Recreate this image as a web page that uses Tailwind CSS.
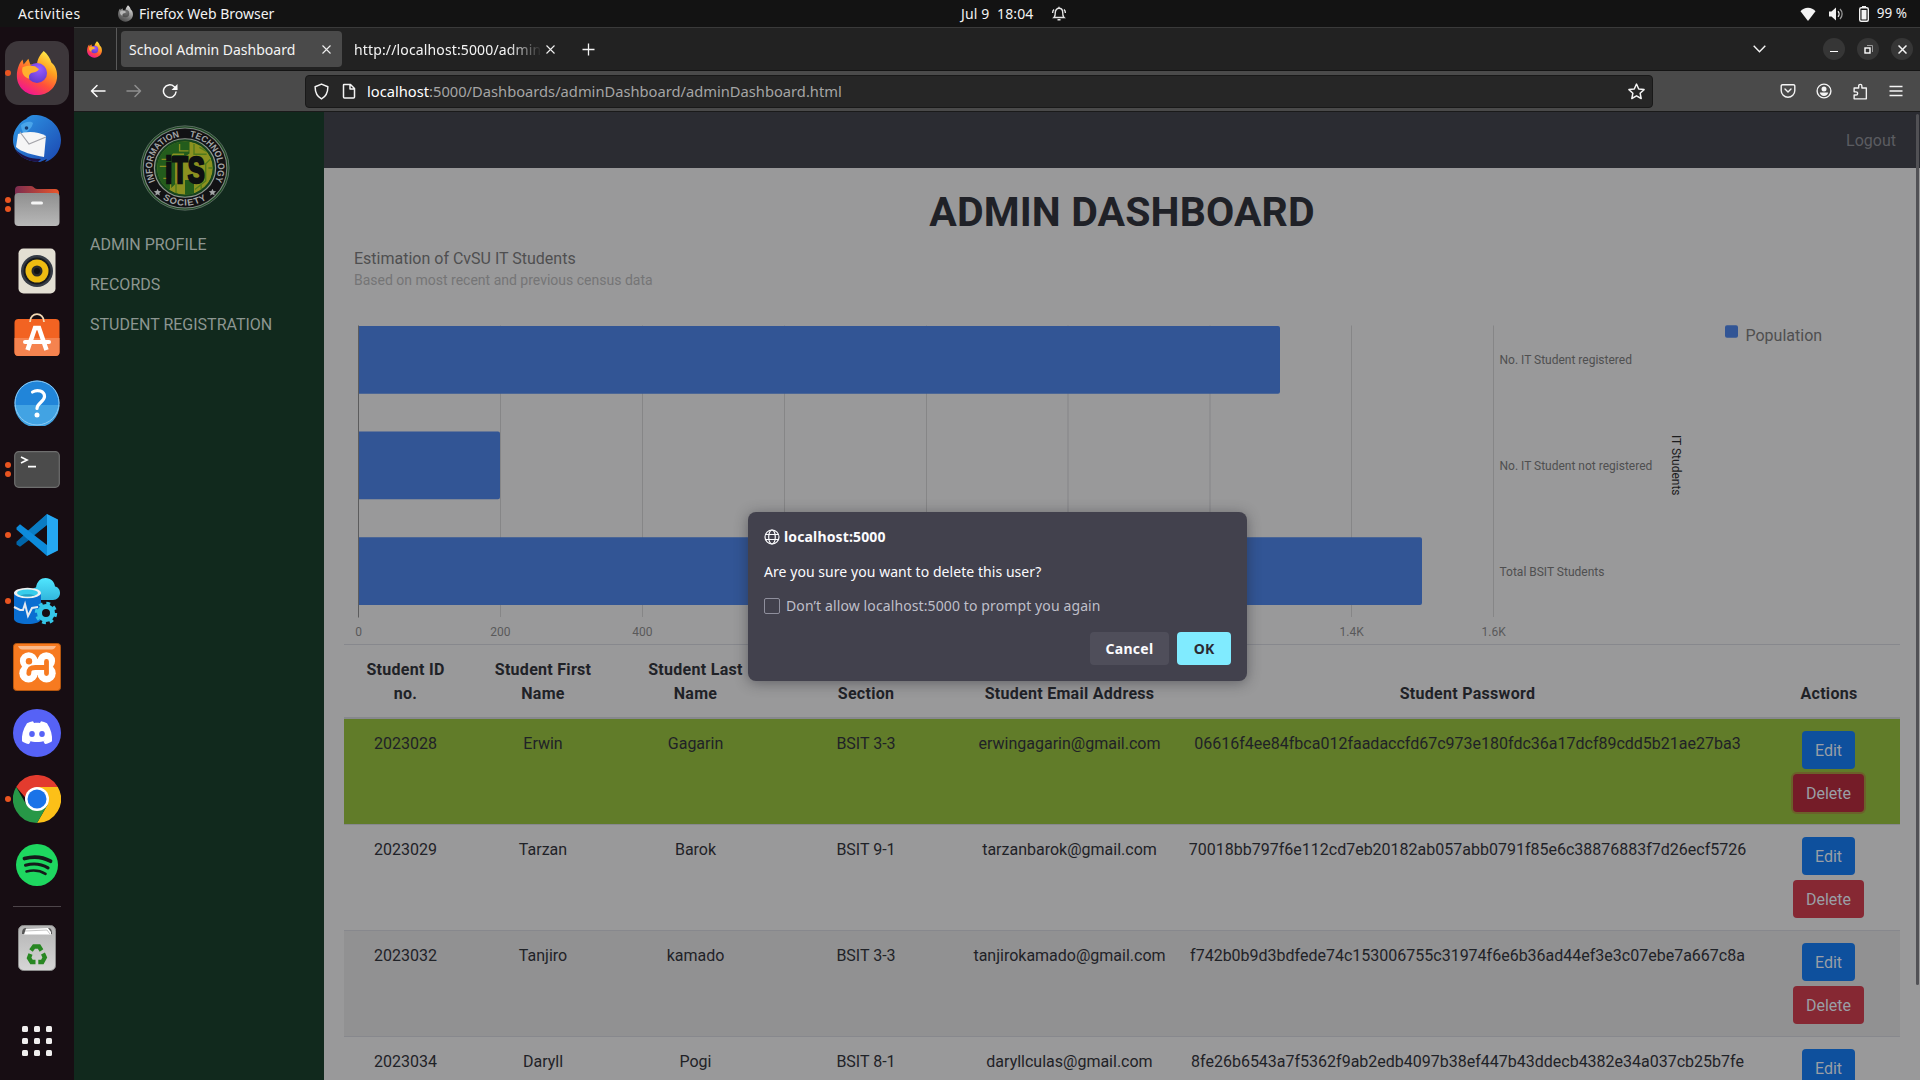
<!DOCTYPE html>
<html lang="en">
<head>
<meta charset="utf-8">
<title>School Admin Dashboard</title>
<script src="https://cdn.jsdelivr.net/npm/@tailwindcss/browser@4"></script>
</head>
<body class="w-[1920px] h-[1080px] overflow-hidden bg-[#99999a] font-['Roboto',sans-serif]">
<svg class="absolute size-0">
  <defs>
    <linearGradient id="fxBody" x1="0.8" y1="0" x2="0.25" y2="1"><stop offset="0" stop-color="#fff44f"/><stop offset=".35" stop-color="#ffa020"/><stop offset=".65" stop-color="#ff4f3a"/><stop offset="1" stop-color="#f0109a"/></linearGradient>
    <radialGradient id="fxCore" cx=".6" cy=".3" r=".8"><stop offset="0" stop-color="#9a5cff"/><stop offset="1" stop-color="#5b35c8"/></radialGradient>
    <linearGradient id="tb" x1="0" y1="0" x2="1" y2="1"><stop offset="0" stop-color="#2f9be8"/><stop offset="1" stop-color="#1b46b0"/></linearGradient>
    <linearGradient id="fold" x1="0" y1="0" x2="1" y2="0"><stop offset="0" stop-color="#7b2c50"/><stop offset="1" stop-color="#e9562a"/></linearGradient>
    <linearGradient id="grey" x1="0" y1="0" x2="0" y2="1"><stop offset="0" stop-color="#8f8f8f"/><stop offset="1" stop-color="#b8b8b8"/></linearGradient>
    <linearGradient id="bin" x1="0" y1="0" x2="0" y2="1"><stop offset="0" stop-color="#b4b4b4"/><stop offset="1" stop-color="#d6d6d6"/></linearGradient>
    <linearGradient id="cloud" x1="0" y1="0" x2="0" y2="1"><stop offset="0" stop-color="#50e6ff"/><stop offset="1" stop-color="#32b6dc"/></linearGradient>
    <symbol id="firefox" viewBox="0 0 48 48">
      <path fill="url(#fxBody)" d="M31 1c4 3 7 8 8 12 4 3 6 8 6 14 0 11-9 20-21 20S3 38 3 27c0-6 2-13 6-17l1 5 5-6 2 6c3 0 5 0 7 1 0-6 3-11 7-15z"/>
      <circle cx="24" cy="24" r="10.5" fill="url(#fxCore)"/>
      <path fill="#ffb02e" d="M9 18c5-2 9-2 13-1l4 3c-2 3-5 3-8 4-2 1-3 3-2 6-5-1-9-6-7-12z"/>
    </symbol>
  </defs>
</svg>
<div class="flex h-[1080px] w-[1920px] flex-col">

  <!-- GNOME top bar -->
  <header class="relative flex h-[27px] shrink-0 items-center bg-[#131313] pl-[18px] pr-[13px] font-['Noto_Sans',sans-serif] text-[14px] text-[#f2f2f2]">
    <span class="w-[62px] whitespace-nowrap tracking-[0.03em]">Activities</span>
    <svg class="ml-[37px] size-[17px] shrink-0 grayscale" viewBox="0 0 48 48"><use href="#firefox"/></svg>
    <span class="ml-[5px] whitespace-nowrap">Firefox Web Browser</span>
    <div class="absolute left-[961px] top-0 flex h-[27px] items-center">
      <span class="w-[74px] whitespace-pre tracking-[0.01em]">Jul 9  18:04</span>
      <svg class="ml-[16px] size-[16px]" viewBox="0 0 16 16" fill="none" stroke="#e6e6e6" stroke-width="1.4"><path d="M3 11.500c1.200-1 1.300-2.500 1.300-5C4.300 4 6 2.300 8 2.300s3.700 1.700 3.700 4.200c0 2.500.1 4 1.300 5zM6.500 13.800h3M8 .8v1.500M13 3.500c1 1 1.400 2 1.400 3.500M3 3.500c-1 1-1.400 2-1.400 3.500"/></svg>
    </div>
    <div class="ml-auto flex items-center">
      <svg class="h-[16px] w-[16px]" viewBox="0 0 16 16" fill="#f2f2f2"><path d="M8 15L.5 5.200C2.300 3 5 1.800 8 1.800S13.700 3 15.500 5.200z"/></svg>
      <svg class="ml-[12px] h-[16px] w-[16px]" viewBox="0 0 16 16"><path fill="#f2f2f2" d="M1 5.500h2.500L8 1.500v13L3.500 10.500H1z"/><path fill="none" stroke="#f2f2f2" stroke-width="1.300" d="M10 5.200c1.400 1.500 1.400 4.100 0 5.600"/><path fill="none" stroke="#999" stroke-width="1.300" d="M12 3c2.800 2.700 2.800 7.300 0 10"/></svg>
      <svg class="ml-[12px] h-[16px] w-[16px]" viewBox="0 0 16 16"><path fill="#f2f2f2" d="M6 0h4v2H6z"/><rect x="3.700" y="1.700" width="8.600" height="13.600" rx="1.500" fill="none" stroke="#f2f2f2" stroke-width="1.400"/><path fill="#f2f2f2" d="M5.500 4h5v9.500h-5z"/></svg>
      <span class="ml-[5px] whitespace-nowrap text-[13.5px]">99 %</span>
    </div>
  </header>

  <div class="flex min-h-0 flex-1">
    <!-- Dock -->
    <aside class="flex w-[74px] shrink-0 flex-col items-center bg-[#170d13] pt-[13px]">
      <div class="relative flex h-[66px] w-full items-center justify-center">
        <div class="flex size-[64px] items-center justify-center rounded-[14px] bg-[#3d373b]"><svg class="size-[46px]"><use href="#firefox"/></svg></div>
        <i class="absolute left-[5px] size-[6px] rounded-full bg-[#e95420]"></i>
      </div>
      <div class="flex h-[66px] items-center"><svg class="size-[48px]" viewBox="0 0 48 48"><path fill="url(#tb)" d="M20 0c14-1 28 10 28 25 0 9-5 17-13 21l-3 1 2-3-7 3C12 47 0 38 0 25 0 14 8 6 13 4c2-2 4-3.500 7-4z"/><path fill="#1e1145" d="M2 34c6 6 14 10 26 10l-3 3C14 46 6 42 2 34z"/><path fill="#4aa5ea" d="M8 10c5-4 10-4 12-2-1 5-5 8-9 11-2-3-3-6-3-9z"/><path fill="#f5f5f6" d="M5 19c8-3 20-3 28 2l-2 21C20 40 8 37 3 32z"/><path fill="none" stroke="#a4a4aa" stroke-width="1.200" d="M7 17l9 12 17-7"/><circle cx="13.500" cy="13" r="1.800" fill="#163a70"/></svg></div>
      <div class="relative flex h-[66px] w-full items-center justify-center">
        <svg class="size-[46px]" viewBox="0 0 46 46"><path fill="url(#fold)" d="M1 8a4 4 0 0 1 4-4h12c3 0 3 3 6 3h18a4 4 0 0 1 4 4v14H1z"/><rect x=".5" y="11" width="45" height="33" rx="4" fill="url(#grey)"/><rect x="17" y="19.500" width="12" height="3" rx="1.500" fill="#f5f5f5"/></svg>
        <i class="absolute left-[5px] top-[25px] size-[6px] rounded-full bg-[#e95420]"></i><i class="absolute left-[5px] top-[34px] size-[6px] rounded-full bg-[#e95420]"></i>
      </div>
      <div class="flex h-[66px] items-center"><svg class="size-[48px]" viewBox="0 0 48 48"><rect x="5.500" y="1.500" width="37" height="45" rx="5" fill="#e3dfd3"/><circle cx="24" cy="24" r="16" fill="#353b45"/><circle cx="24" cy="24" r="13.500" fill="#181a1e"/><circle cx="24" cy="24" r="11.500" fill="#eebc12"/><circle cx="24" cy="24" r="5.500" fill="#2b2b2b"/><circle cx="24" cy="24" r="3" fill="#111"/></svg></div>
      <div class="flex h-[66px] items-center"><svg class="size-[48px]" viewBox="0 0 48 48"><rect x="1.500" y="6" width="45" height="37" rx="4" fill="#f26322"/><path fill="#f5834f" d="M1.500 25h45v14a4 4 0 0 1-4 4h-37a4 4 0 0 1-4-4z"/><path d="M17 9c0-10.500 14-10.500 14 0" fill="none" stroke="#f3d9b4" stroke-width="1.800"/><path fill="none" stroke="#fff" stroke-width="4.500" d="M14.500 37L22 15h4l7.500 22"/><path stroke="#fff" stroke-width="4" stroke-linecap="round" d="M12 29h24"/></svg></div>
      <div class="flex h-[66px] items-center"><svg class="size-[46px]" viewBox="0 0 46 46"><circle cx="23" cy="23" r="22.500" fill="#2185d9"/><path fill="#42a3e3" d="M.5 25h45a22.500 22.500 0 0 1-45 0z"/><circle cx="23" cy="23" r="22" fill="none" stroke="#8ecbf3"/><path fill="none" stroke="#fff" stroke-width="3.200" stroke-linecap="round" stroke-linejoin="round" d="M18.500 12c5-3 12-1 12 4.500 0 5-7.500 6.500-7.500 12"/><circle cx="23" cy="35" r="2.500" fill="#fff"/></svg></div>
      <div class="relative flex h-[66px] w-full items-center justify-center">
        <svg class="h-[37px] w-[46px]" viewBox="0 0 46 37"><rect x=".7" y=".7" width="44.600" height="35.600" rx="4" fill="#4b4b4b" stroke="#6e6e6e" stroke-width="1.200"/><path fill="none" stroke="#fff" stroke-width="1.700" d="M7 6l6 3-6 3M14 15.700h8"/></svg>
        <i class="absolute left-[5px] top-[26px] size-[6px] rounded-full bg-[#e95420]"></i><i class="absolute left-[5px] top-[35px] size-[6px] rounded-full bg-[#e95420]"></i>
      </div>
      <div class="relative flex h-[66px] w-full items-center justify-center">
        <svg class="size-[42px]" viewBox="0 0 42 42"><path fill="#0065a9" d="M.5 28.500v2l3.500 2.200 9-6.700L33 9 31 0 .8 27.500z"/><path fill="#0a7cc4" d="M31 0v11L12 25.500 7 21z"/><path fill="#0d8bdb" d="M.5 13.500L4 10.200 31 31v11L.5 15.500z"/><path fill="#25a8f3" d="M31 0l11 5.500v31L31 42z"/></svg>
        <i class="absolute left-[5px] size-[6px] rounded-full bg-[#e95420]"></i>
      </div>
      <div class="relative flex h-[66px] w-full items-center justify-center">
        <svg class="size-[48px]" viewBox="0 0 48 48"><path fill="url(#cloud)" d="M23 23a7 7 0 0 1-6-6c0-4 3-6 6-6.500C24 4 28 1 32.500 1 38 1 41.500 5 42 9.500c3 .5 5 3 5 6.500 0 4-3 7-7 7z"/><path fill="#0a6ed1" d="M1 15v27c0 3 6 5 13.500 5S28 45 28 42V15z"/><ellipse cx="14.500" cy="16" rx="13.500" ry="5.200" fill="#f0f0f0"/><ellipse cx="14.500" cy="16" rx="10.500" ry="3.400" fill="#38cdeb"/><path fill="#26a0c4" d="M7 18.300c4-1.500 11-1.500 15 0-4 1.600-11 1.600-15 0z"/><path fill="none" stroke="#e6eaf0" stroke-width="2" d="M1 30l6 3h3l2-6 3 12 4-8 6-1"/><circle cx="33" cy="36" r="6.500" fill="none" stroke="#35c6e8" stroke-width="5"/><circle cx="33" cy="36" r="9.700" fill="none" stroke="#35c6e8" stroke-width="3" stroke-dasharray="3.810 3.810"/></svg>
        <i class="absolute left-[5px] size-[6px] rounded-full bg-[#e95420]"></i>
      </div>
      <div class="flex h-[66px] items-center"><svg class="size-[48px]" viewBox="0 0 48 48"><rect x=".5" y=".5" width="47" height="47" rx="3" fill="#f77a20" stroke="#b5560f"/><path fill="#fbb98a" d="M5 3h38c-1 3-3 3.500-6 3.500H11C8 6.500 6 6 5 3z"/><g fill="#fff"><circle cx="15.700" cy="18" r="8.800"/><circle cx="33.300" cy="18" r="8.800"/><circle cx="15.500" cy="30.300" r="9.200"/><circle cx="33.500" cy="30.300" r="9.200"/><path d="M15 16h19v16H15z"/></g><circle cx="16" cy="18.300" r="3.200" fill="#f77a20"/><path fill="none" stroke="#f77a20" stroke-width="4.800" stroke-linecap="round" d="M15.800 30.500c0-5 2.500-6 6.500-6h11M33.500 18.500v12"/></svg></div>
      <div class="flex h-[66px] items-center"><svg class="size-[48px]" viewBox="0 0 48 48"><circle cx="24" cy="24" r="24" fill="#5662f6"/><path fill="#fff" d="M14 14.200c2-1 4-1.600 6-2l1 1.700c2-.3 4-.3 6 0l1-1.700c2 .4 4 1 6 2 4 6 5.500 12 5 18-2 1.400-4.400 2.300-7 2.900l-1.600-2.500 2-1.200c-5.600 2.200-11.200 2.200-16.800 0l2 1.200L16 35.100c-2.600-.6-5-1.500-7-2.900-.5-6 1-12 5-18z"/><ellipse cx="19" cy="25" rx="2.800" ry="3" fill="#5662f6"/><ellipse cx="29" cy="25" rx="2.800" ry="3" fill="#5662f6"/></svg></div>
      <div class="relative flex h-[66px] w-full items-center justify-center">
        <svg class="size-[48px]" viewBox="0 0 48 48"><path fill="#e33b2e" d="M3.200 12A24 24 0 0 1 44.800 12H24v24z"/><path fill="#fcc018" d="M44.800 12A24 24 0 0 1 24 48l10.400-18L24 12z"/><path fill="#279847" d="M24 48A24 24 0 0 1 3.200 12l10.400 18 20.800 0z"/><circle cx="24" cy="24" r="12" fill="#fff"/><circle cx="24" cy="24" r="9.500" fill="#1a73e8"/></svg>
        <i class="absolute left-[5px] size-[6px] rounded-full bg-[#e95420]"></i>
      </div>
      <div class="flex h-[66px] items-center"><svg class="size-[42px]" viewBox="0 0 42 42"><circle cx="21" cy="21" r="21" fill="#1ed760"/><g fill="none" stroke="#15191a" stroke-linecap="round"><path stroke-width="3.800" d="M8.500 14.500c9-2.500 18.500-1.500 26 2.700"/><path stroke-width="3.100" d="M9.500 21.200c8-2.200 16-1.200 22.500 2.700"/><path stroke-width="2.600" d="M10.500 27.500c7-1.800 13.500-1 19 2.300"/></g></svg></div>
      <div class="mt-[8px] h-px w-[48px] bg-[#4d454a]"></div>
      <svg class="mt-[18px] h-[46px] w-[38px]" viewBox="0 0 38 46"><rect x=".5" y=".5" width="37" height="45" rx="5" fill="url(#bin)" stroke="#8b8b8b"/><path fill="#555" d="M4 9c0-4 1-6 4-6h22c3 0 4 2 4 6z"/><path fill="#fff" d="M6 9.500l2-6 22-.5 3 4v2.500z"/><path fill="none" stroke="#aaa" stroke-width=".7" d="M7 6l22-1 3 4"/><g fill="none" stroke="#288722" stroke-width="4.300"><path d="M13 25.500l3-4h5l2.500 4"/><path d="M25 28.500l1.800 4-2.500 4.500h-4"/><path d="M17.500 37h-4l-2.500-4 1.500-4"/></g></svg>
      <div class="mt-[55px] grid grid-cols-3 gap-[6px]">
        <i class="size-[6px] rounded-[1.500px] bg-[#f0eeee]"></i><i class="size-[6px] rounded-[1.500px] bg-[#f0eeee]"></i><i class="size-[6px] rounded-[1.500px] bg-[#f0eeee]"></i>
        <i class="size-[6px] rounded-[1.500px] bg-[#f0eeee]"></i><i class="size-[6px] rounded-[1.500px] bg-[#f0eeee]"></i><i class="size-[6px] rounded-[1.500px] bg-[#f0eeee]"></i>
        <i class="size-[6px] rounded-[1.500px] bg-[#f0eeee]"></i><i class="size-[6px] rounded-[1.500px] bg-[#f0eeee]"></i><i class="size-[6px] rounded-[1.500px] bg-[#f0eeee]"></i>
      </div>
    </aside>

    <!-- Firefox window -->
    <div class="flex min-w-0 flex-1 flex-col">
      <!-- Tabs -->
      <div class="flex h-[44px] shrink-0 items-center border-b border-t border-b-[#141414] border-t-[#3a3a3a] bg-[#222222] pr-[7px] font-['Noto_Sans',sans-serif] text-[14px] text-[#f4f4f4]">
        <div class="flex h-full w-[43px] items-center justify-center border-r border-[#5a5a5a] pr-[2px]"><svg class="size-[17px]"><use href="#firefox"/></svg></div>
        <div class="ml-[4px] flex h-[36px] w-[221px] items-center rounded-[4px] bg-[#4a4a4a] pl-[8px] pr-[11px]">
          <span class="whitespace-nowrap">School Admin Dashboard</span>
          <svg class="ml-auto size-[9px]" viewBox="0 0 9 9" stroke="#f0f0f0" stroke-width="1.100"><path d="M.5.5l8 8M8.500.5l-8 8"/></svg>
        </div>
        <div class="ml-[12px] w-[188px] overflow-hidden whitespace-nowrap tracking-[0.01em] [mask-image:linear-gradient(to_right,#000_82%,transparent)]">http://localhost:5000/adminD</div>
        <svg class="ml-[4px] size-[9px] shrink-0" viewBox="0 0 9 9" stroke="#f0f0f0" stroke-width="1.100"><path d="M.5.5l8 8M8.500.5l-8 8"/></svg>
        <svg class="ml-[27px] size-[13px] shrink-0" viewBox="0 0 13 13" stroke="#f4f4f4" stroke-width="1.300"><path d="M6.500.5v12M.5 6.500h12"/></svg>
        <div class="ml-auto flex items-center">
          <svg class="mr-[57px] h-[8px] w-[13px]" viewBox="0 0 13 8" fill="none" stroke="#f4f4f4" stroke-width="1.400"><path d="M.7.7l5.800 6 5.800-6"/></svg>
          <div class="flex gap-[12px]">
            <div class="flex size-[22px] items-center justify-center rounded-full bg-[#363636]"><i class="mt-[5px] h-[1.500px] w-[8px] bg-white"></i></div>
            <div class="flex size-[22px] items-center justify-center rounded-full bg-[#363636]"><svg class="size-[9px]" viewBox="0 0 9 9" fill="none"><path stroke="#999" d="M3 .5h5.500V7"/><rect x="1" y="3" width="5" height="5" stroke="#fff" stroke-width="1.400"/></svg></div>
            <div class="flex size-[22px] items-center justify-center rounded-full bg-[#363636]"><svg class="size-[9px]" viewBox="0 0 9 9" stroke="#f4f4f4" stroke-width="1.500"><path d="M.5.5l8 8M8.500.5l-8 8"/></svg></div>
          </div>
        </div>
      </div>
      <!-- Toolbar -->
      <div class="flex h-[41px] shrink-0 items-center border-b border-[#1a1a1a] bg-[#4a4a4a] pl-[16px] pr-[17px] font-['Noto_Sans',sans-serif] text-[14.7px]">
        <svg class="size-[16px]" viewBox="0 0 16 16" fill="none" stroke="#fbfbfb" stroke-width="1.500" stroke-linecap="round" stroke-linejoin="round"><path d="M15 8H1.500M7 2.500L1.500 8 7 13.500"/></svg>
        <svg class="ml-[20px] size-[16px]" viewBox="0 0 16 16" fill="none" stroke="#8f8f8f" stroke-width="1.500" stroke-linecap="round" stroke-linejoin="round"><path d="M1 8h13.500M9 2.500L14.500 8 9 13.500"/></svg>
        <svg class="ml-[20px] size-[16px]" viewBox="0 0 16 16" fill="none" stroke="#fbfbfb" stroke-width="1.500" stroke-linecap="round"><path d="M14 9a6.300 6.300 0 1 1-2-5.500L14.500 6"/><path fill="#fbfbfb" stroke="none" d="M15.500 1v6h-6z"/></svg>
        <div class="ml-[127px] flex h-[33px] w-[1348px] items-center rounded-[4px] border border-[#191919] bg-[#262626] pl-[7px] pr-[7px]">
          <svg class="size-[17px]" viewBox="0 0 16 16" fill="none" stroke="#f4f4f4" stroke-width="1.400" stroke-linejoin="round"><path d="M8 1l6 2.500c0 5-1.500 9-6 11.500C3.500 12.500 2 8.500 2 3.500z"/></svg>
          <svg class="ml-[11px] size-[16px]" viewBox="0 0 16 16" fill="none" stroke="#f4f4f4" stroke-width="1.500" stroke-linejoin="round"><path d="M3 1.500h6.500L13.500 5.500v8.500a1 1 0 0 1-1 1H3.500a1 1 0 0 1-1-1V2a.5.5 0 0 1 .5-.5zM9 1.500V6h4.500"/></svg>
          <span class="ml-[10px] whitespace-nowrap text-[#a5a5a5]"><span class="text-white">localhost</span>:5000/Dashboards/adminDashboard/adminDashboard.html</span>
          <svg class="ml-auto size-[17px]" viewBox="0 0 16 16" fill="none" stroke="#f4f4f4" stroke-width="1.400" stroke-linejoin="round"><path d="M8 1l2.100 4.600 5 .6-3.700 3.400 1 5L8 12.100l-4.400 2.500 1-5L.9 6.200l5-.6z"/></svg>
        </div>
        <div class="ml-auto flex items-center gap-[20px]">
          <svg class="size-[16px]" viewBox="0 0 16 16" fill="none" stroke="#f4f4f4" stroke-width="1.400" stroke-linecap="round" stroke-linejoin="round"><path d="M2.500 1.700h11a1.300 1.300 0 0 1 1.300 1.300v4.500a6.800 6.800 0 0 1-13.600 0V3a1.300 1.300 0 0 1 1.300-1.300zM5 6l3 3 3-3"/></svg>
          <svg class="size-[16px]" viewBox="0 0 16 16"><circle cx="8" cy="8" r="6.900" fill="none" stroke="#f4f4f4" stroke-width="1.400"/><circle cx="8" cy="6" r="2.500" fill="#f4f4f4"/><path fill="#f4f4f4" d="M3.800 9.500h8.400c-.5 2.200-2 3.500-4.200 3.500s-3.700-1.300-4.200-3.500z"/></svg>
          <svg class="size-[17px]" viewBox="0 0 16 16" fill="none" stroke="#f4f4f4" stroke-width="1.300" stroke-linejoin="round"><path d="M2 14.900v-3.600h1.800a1.500 1.500 0 0 0 0-3H2V4.700h4.300V2.800a1.500 1.500 0 0 1 3 0v1.900h4.200v10.200z"/></svg>
          <svg class="size-[14px]" viewBox="0 0 14 14" stroke="#f4f4f4" stroke-width="1.400"><path d="M.5 2.500h13M.5 7h13M.5 11.500h13"/></svg>
        </div>
      </div>

      <!-- Page -->
      <div class="relative flex min-h-0 flex-1 overflow-hidden">
        <nav class="flex w-[250px] shrink-0 flex-col bg-[#11291d] pt-[13px]">
          <svg class="ml-[66px] h-[86px] w-[90px]" viewBox="0 0 100 100" preserveAspectRatio="none">
            <defs><path id="arcTop" d="M50 50m-36.500 0a36.500 36.500 0 1 1 73 0a36.500 36.500 0 1 1 -73 0"/><path id="arcBottom" d="M6.300 50a43.700 43.700 0 0 0 87.400 0"/><clipPath id="seal"><circle cx="50" cy="50" r="31"/></clipPath></defs>
            <circle cx="50" cy="50" r="49" fill="#1c4a20" stroke="#63706a" stroke-width="1"/><circle cx="50" cy="50" r="46.500" fill="#121214" stroke="#7c8580" stroke-width="1.200"/>
            <circle cx="50" cy="50" r="34" fill="#16431d" stroke="#8f9690" stroke-width="1.400"/>
            <g clip-path="url(#seal)"><circle cx="50" cy="50" r="31" fill="#8b9120"/><path fill="#235c1c" d="M19 19h36v14l-8 6h-8v30l-6 6H19zM50 64h10v20H50z"/><path fill="none" stroke="#8b9120" stroke-width="1.500" d="M24 40h8l5-6h12M22 48h10M26 62h8v14M44 22v8h10"/><path fill="none" stroke="#4f7a1c" stroke-width="1.500" d="M60 22v12h14M66 26l10 6M78 40l-5 5v20l-12 10M68 70v8M76 50h6M40 68v12"/></g>
            <text x="50" y="67.500" text-anchor="middle" textLength="44" lengthAdjust="spacingAndGlyphs" font-family="Liberation Sans" font-weight="700" font-size="43" fill="#0d1011" stroke="#0d1011" stroke-width="3">iTS</text>
            <g font-family="Liberation Sans" font-weight="700" font-size="10.500" fill="#a3a5a6">
              <text transform="rotate(-25 50 50)" textLength="67"><textPath href="#arcTop" textLength="67" lengthAdjust="spacingAndGlyphs">INFORMATION</textPath></text>
              <text transform="rotate(98 50 50)" textLength="68"><textPath href="#arcTop" textLength="68" lengthAdjust="spacingAndGlyphs">TECHNOLOGY</textPath></text>
              <text text-anchor="middle" letter-spacing="1"><textPath href="#arcBottom" startOffset="50%">SOCIETY</textPath></text>
            </g>
            <path fill="#a3a5a6" d="M19.500 74l1.200 2.700 2.900.3-2.200 2 .7 2.900-2.600-1.500-2.600 1.500.7-2.900-2.200-2 2.900-.3zM80.500 74l1.200 2.700 2.900.3-2.200 2 .7 2.900-2.600-1.500-2.600 1.500.7-2.900-2.200-2 2.900-.3z"/>
          </svg>
          <ul class="mt-[22px] pl-[16px] text-[16px] leading-[24px] text-[#8d9691]">
            <li class="mb-[16px]">ADMIN PROFILE</li><li class="mb-[16px]">RECORDS</li><li>STUDENT REGISTRATION</li>
          </ul>
        </nav>
        <div class="flex min-w-0 flex-1 flex-col">
          <div class="flex h-[56px] shrink-0 items-center justify-end bg-[#2b2c32] pr-[24px] pt-[2px] text-[16px] text-[#5b5c61]">Logout</div>
          <h1 class="mt-[20px] text-center text-[41px] font-bold leading-[48px] tracking-[0.003em] text-[#1f2127]">ADMIN DASHBOARD</h1>
          <svg class="ml-[20px] h-[408px] w-[1556px] shrink-0" viewBox="344 236 1556 408" font-family="Roboto, sans-serif">
            <text x="354" y="264" font-size="16" fill="#4f4f50">Estimation of CvSU IT Students</text>
            <text x="354" y="285" font-size="14" fill="#757576">Based on most recent and previous census data</text>
            <g fill="#868687"><path d="M500 325.500h1v291.500h-1zM642 325.500h1v291.500h-1zM784 325.500h1v291.500h-1zM926 325.500h1v291.500h-1zM1067.500 325.500h1v291.500h-1zM1209.500 325.500h1v291.500h-1zM1351 325.500h1v291.500h-1zM1493 325.500h1v291.500h-1z"/></g>
            <g fill="#325595"><path d="M358.500 326H1278a2 2 0 0 1 2 2V391.700a2 2 0 0 1-2 2H358.500zM358.500 431.600H498a2 2 0 0 1 2 2V497.200a2 2 0 0 1-2 2H358.500zM358.500 537.200H1420a2 2 0 0 1 2 2V603a2 2 0 0 1-2 2H358.500z"/><rect x="1725" y="325.300" width="13" height="12.500" rx="2"/></g>
            <path fill="#5c5c5d" d="M358 325.500h1v292h-1z"/>
            <g font-size="12" fill="#59595a" text-anchor="middle"><text x="358.500" y="636">0</text><text x="500.400" y="636">200</text><text x="642.300" y="636">400</text><text x="1351.700" y="636">1.4K</text><text x="1493.600" y="636">1.6K</text></g>
            <g font-size="12" fill="#4f4f50"><text x="1499.500" y="364">No. IT Student registered</text><text x="1499.500" y="470">No. IT Student not registered</text><text x="1499.500" y="576">Total BSIT Students</text></g>
            <text transform="translate(1672 435) rotate(90)" font-size="12" fill="#1c1c1d">IT Students</text>
            <text x="1745.500" y="341" font-size="16" fill="#4f4f50">Population</text>
          </svg>
          <!-- Student table -->
          <table class="ml-[20px] w-[1556px] table-fixed border-separate border-spacing-0 text-center text-[16px] leading-[24px] text-[#1f2227]">
            <colgroup><col class="w-[123px]"><col class="w-[152px]"><col class="w-[153px]"><col class="w-[188px]"><col class="w-[219px]"><col class="w-[577px]"><col class="w-[144px]"></colgroup>
            <thead class="align-bottom font-bold tracking-[0.018em] [&_th]:border-b-2 [&_th]:border-t [&_th]:border-[#87888d] [&_th]:px-[10px] [&_th]:pb-[11px] [&_th]:pt-[13px]">
              <tr><th>Student ID<br>no.</th><th>Student First Name</th><th>Student Last Name</th><th>Student Course &amp; Section</th><th>Student Email Address</th><th>Student Password</th><th class="pl-[12px]!">Actions</th></tr>
            </thead>
            <tbody class="align-top [&_td]:h-[106px] [&_td]:border-b [&_td]:border-[#87888d] [&_td]:px-0 [&_td]:pt-[13px]">
              <tr class="bg-[#617c29]"><td>2023028</td><td>Erwin</td><td>Gagarin</td><td>BSIT 3-3</td><td>erwingagarin@gmail.com</td><td>06616f4ee84fbca012faadaccfd67c973e180fdc36a17dcf89cdd5b21ae27ba3</td>
                <td class="pt-[12px]!"><div class="flex flex-col items-center gap-[5px] text-[#9a9fa6]"><span class="flex h-[38px] w-[53px] items-center justify-center rounded-[4px] bg-[#0e509d] pl-px pt-[2px]">Edit</span><span class="flex h-[38px] w-[71px] items-center justify-center rounded-[4px] bg-[#751c28] pl-px pt-[2px] shadow-[0_0_0_2px_rgba(125,50,45,0.35)]">Delete</span></div></td></tr>
              <tr><td>2023029</td><td>Tarzan</td><td>Barok</td><td>BSIT 9-1</td><td>tarzanbarok@gmail.com</td><td>70018bb797f6e112cd7eb20182ab057abb0791f85e6c38876883f7d26ecf5726</td>
                <td class="pt-[12px]!"><div class="flex flex-col items-center gap-[5px] text-[#9a9fa6]"><span class="flex h-[38px] w-[53px] items-center justify-center rounded-[4px] bg-[#0e509d] pl-px pt-[2px]">Edit</span><span class="flex h-[38px] w-[71px] items-center justify-center rounded-[4px] bg-[#862833] pl-px pt-[2px]">Delete</span></div></td></tr>
              <tr class="bg-[#919192]"><td>2023032</td><td>Tanjiro</td><td>kamado</td><td>BSIT 3-3</td><td>tanjirokamado@gmail.com</td><td>f742b0b9d3bdfede74c153006755c31974f6e6b36ad44ef3e3c07ebe7a667c8a</td>
                <td class="pt-[12px]!"><div class="flex flex-col items-center gap-[5px] text-[#9a9fa6]"><span class="flex h-[38px] w-[53px] items-center justify-center rounded-[4px] bg-[#0e509d] pl-px pt-[2px]">Edit</span><span class="flex h-[38px] w-[71px] items-center justify-center rounded-[4px] bg-[#862833] pl-px pt-[2px]">Delete</span></div></td></tr>
              <tr><td>2023034</td><td>Daryll</td><td>Pogi</td><td>BSIT 8-1</td><td>daryllculas@gmail.com</td><td>8fe26b6543a7f5362f9ab2edb4097b38ef447b43ddecb4382e34a037cb25b7fe</td>
                <td class="pt-[12px]!"><div class="flex flex-col items-center text-[#9a9fa6]"><span class="flex h-[38px] w-[53px] items-center justify-center rounded-[4px] bg-[#0e509d] pl-px pt-[2px]">Edit</span></div></td></tr>
            </tbody>
          </table>
        </div>
        <i class="absolute right-[1px] top-[2px] h-[871px] w-[3px] rounded-full bg-[#515155]"></i>

        <!-- Confirm dialog -->
        <div class="absolute left-[674px] top-[400px] flex h-[169px] w-[499px] flex-col rounded-[8px] bg-[#42414d] px-[16px] pt-[15px] font-['Noto_Sans',sans-serif] text-[14px] leading-[20px] text-[#fbfbfe] shadow-[0_2px_14px_rgba(30,30,40,0.45)]">
          <div class="flex items-center"><svg class="size-[16px]" viewBox="0 0 16 16" fill="none" stroke="#fbfbfe" stroke-width="1.200"><circle cx="8" cy="8" r="7"/><ellipse cx="8" cy="8" rx="3.300" ry="7"/><path d="M1.500 5.500h13M1.500 10.500h13"/></svg><b class="ml-[4px] tracking-[0.01em]">localhost:5000</b></div>
          <p class="mt-[15px] tracking-[0.004em]">Are you sure you want to delete this user?</p>
          <div class="mt-[14px] flex items-center text-[#bfbfc9]"><i class="h-[16px] w-[16px] rounded-[2px] border border-[#8f8f9d]"></i><span class="ml-[6px] tracking-[0.008em]">Don’t allow localhost:5000 to prompt you again</span></div>
          <div class="mt-[16px] flex justify-end gap-[8px] font-bold"><span class="flex h-[33px] w-[79px] items-center justify-center rounded-[4px] bg-[#4f4e5a] tracking-[0.02em]">Cancel</span><span class="flex h-[33px] w-[54px] items-center justify-center rounded-[4px] bg-[#80ebff] text-[#2b2a33]">OK</span></div>
        </div>
      </div>
    </div>
  </div>
</div>
</body>
</html>
